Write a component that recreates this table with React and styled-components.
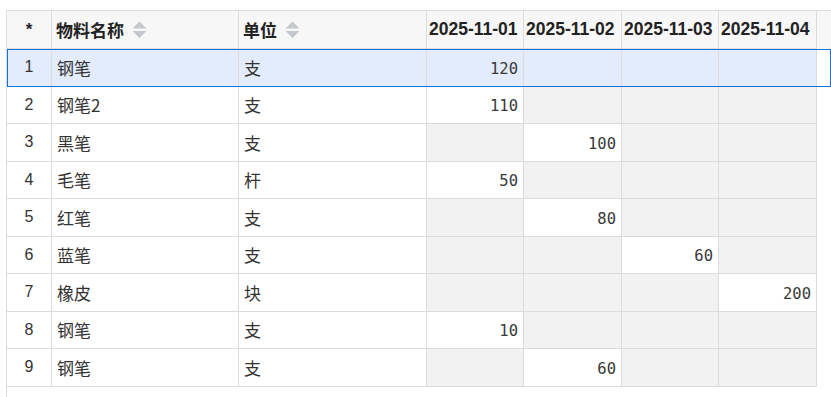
import React from 'react';
import styled, { createGlobalStyle, css } from 'styled-components';

const colors = {
  border: '#dcdcdc',
  headerBg: '#f7f7f7',
  emptyCell: '#f2f2f2',
  selectedBg: '#e2ecfc',
  selectedLine: '#1a6fdf',
  text: '#333333',
  header: '#222222',
  sortIcon: '#c4c7cc',
};

const GlobalStyle = createGlobalStyle`
  html, body {
    margin: 0;
    padding: 0;
    background: #ffffff;
  }
  body {
    font-family: "Liberation Sans", "Noto Sans CJK SC", sans-serif;
    color: ${colors.text};
  }
`;

const Page = styled.div`
  padding: 10px 0 0 6px;
  height: 100vh;
  box-sizing: border-box;
  overflow: hidden;
`;

const Sheet = styled.div`
  border-top: 1px solid ${colors.border};
  border-left: 1px solid ${colors.border};
  height: 100%;
  display: flex;
  flex-direction: column;
`;

const COLUMNS = '45px 187px 188px 97px 98px 97px 98px';

const HeaderRow = styled.div`
  display: grid;
  grid-template-columns: ${COLUMNS};
  height: 38px;
  background: ${colors.headerBg};
`;

const Row = styled.div`
  display: grid;
  grid-template-columns: ${COLUMNS};
  height: 37.5px;
  ${p => p.$selected && css`
    outline: 1px solid ${colors.selectedLine};
    outline-offset: -1px;
    position: relative;
    z-index: 1;
  `}
`;

const Cell = styled.div`
  box-sizing: border-box;
  border-right: 1px solid ${colors.border};
  border-bottom: 1px solid ${colors.border};
  display: flex;
  align-items: center;
  padding: 0 5px;
  font-size: 17px;
  font-family: "Noto Sans CJK SC", "Liberation Sans", sans-serif;
  color: ${colors.text};
  background: ${p => (p.$selected ? colors.selectedBg : p.$empty ? colors.emptyCell : '#ffffff')};
`;

const IndexCell = styled(Cell)`
  justify-content: center;
  font-family: "Liberation Sans", sans-serif;
  font-size: 16px;
`;

const NumberCell = styled(Cell)`
  justify-content: flex-end;
  padding: 3px 5px 0 0;
  font-family: "DejaVu Sans Mono", "Liberation Mono", monospace;
  font-size: 15.5px;
  color: #3a3a3a;
`;

const HeadCell = styled.div`
  box-sizing: border-box;
  border-right: 1px solid ${colors.border};
  border-bottom: 1px solid ${colors.border};
  display: flex;
  align-items: center;
  justify-content: ${p => (p.$center ? 'center' : 'flex-start')};
  padding: 0 ${p => (p.$tight ? '2px' : '4px')};
  font-weight: 700;
  font-size: ${p => (p.$date ? '17.5px' : '17px')};
  font-family: "Liberation Sans", "Noto Sans CJK SC", sans-serif;
  color: ${colors.header};
  white-space: nowrap;
  overflow: hidden;
`;

const SortIcon = () => (
  <svg width="15" height="18" viewBox="0 0 15 18" style={{ marginLeft: 8 }}>
    <path d="M7.5 0.5 L14.5 7.5 L0.5 7.5 Z" fill={colors.sortIcon} />
    <path d="M0.5 10 L14.5 10 L7.5 17 Z" fill={colors.sortIcon} />
  </svg>
);

const dates = ['2025-11-01', '2025-11-02', '2025-11-03', '2025-11-04'];

const rows = [
  { name: '钢笔', unit: '支', qty: { 0: 120 } },
  { name: '钢笔2', unit: '支', qty: { 0: 110 } },
  { name: '黑笔', unit: '支', qty: { 1: 100 } },
  { name: '毛笔', unit: '杆', qty: { 0: 50 } },
  { name: '红笔', unit: '支', qty: { 1: 80 } },
  { name: '蓝笔', unit: '支', qty: { 2: 60 } },
  { name: '橡皮', unit: '块', qty: { 3: 200 } },
  { name: '钢笔', unit: '支', qty: { 0: 10 } },
  { name: '钢笔', unit: '支', qty: { 1: 60 } },
];

const App = () => {
  return (
    <>
      <GlobalStyle />
      <Page>
        <Sheet>
          <HeaderRow>
            <HeadCell $center>*</HeadCell>
            <HeadCell>物料名称<SortIcon /></HeadCell>
            <HeadCell>单位<SortIcon /></HeadCell>
            {dates.map(d => (
              <HeadCell key={d} $date $tight>{d}</HeadCell>
            ))}
          </HeaderRow>
          {rows.map((r, i) => {
            const selected = i === 0;
            return (
              <Row key={i} $selected={selected}>
                <IndexCell $selected={selected}>{i + 1}</IndexCell>
                <Cell $selected={selected}>{r.name}</Cell>
                <Cell $selected={selected}>{r.unit}</Cell>
                {dates.map((d, j) => (
                  <NumberCell key={d} $selected={selected} $empty={r.qty[j] === undefined}>
                    {r.qty[j]}
                  </NumberCell>
                ))}
              </Row>
            );
          })}
        </Sheet>
      </Page>
    </>
  );
};

export default App;
